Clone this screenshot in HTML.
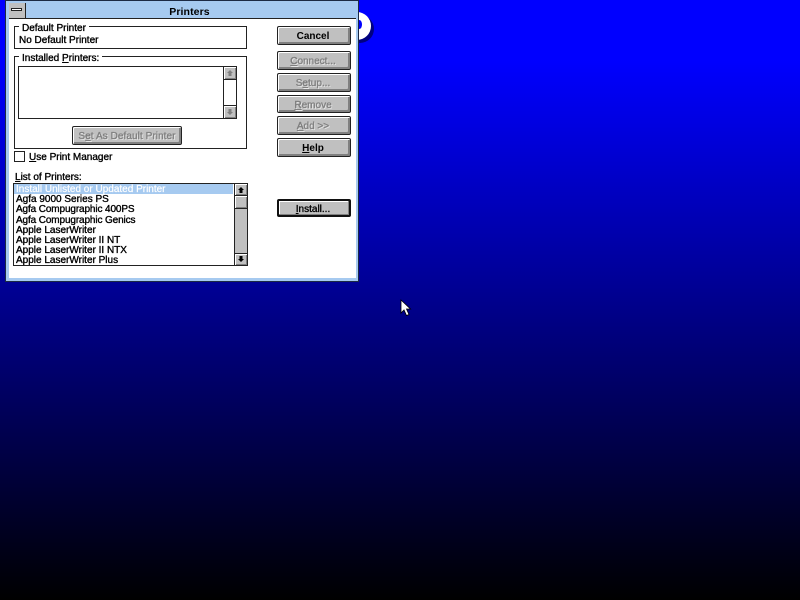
<!DOCTYPE html>
<html><head><meta charset="utf-8">
<style>
html,body{margin:0;padding:0;width:800px;height:600px;overflow:hidden;background:#000}
#bg{position:absolute;left:0;top:0;width:800px;height:600px;background:linear-gradient(to bottom,#0000ff 0,#0000ff 60px,#000 600px)}
.a{position:absolute}
.t{position:absolute;font-family:"Liberation Sans",sans-serif;font-size:10px;line-height:12px;color:#000;white-space:nowrap;-webkit-text-stroke:.35px currentColor;letter-spacing:0}
.t u{text-decoration:underline}
.btn{position:absolute;left:277px;width:74px;box-sizing:border-box;padding-right:2px;background:#c0c0c0;border:1px solid #222;border-radius:2px;box-shadow:inset 1px 1px 0 #fff,inset -2px -2px 0 #808080;text-align:center;font-family:"Liberation Sans",sans-serif;font-size:10px;color:#000;-webkit-text-stroke:.35px currentColor;letter-spacing:0;white-space:nowrap}
.dis{color:#808080;text-shadow:1px 1px 0 #e8e8e8}
.box{position:absolute;box-sizing:border-box;border:1px solid #222;background:#fff}
.sb{position:absolute;box-sizing:border-box;background:#c0c0c0;box-shadow:inset 1px 1px 0 #fff,inset -1px -1px 0 #808080}
</style></head><body>
<div id="bg"></div>

<!-- logo fragment -->
<div class="a" style="left:346px;top:15px;width:28px;height:28px;border-radius:50%;background:#000080"></div>
<div class="a" style="left:343px;top:12px;width:28px;height:28px;border-radius:50%;background:#fff"></div>
<div class="a" style="left:357px;top:20px;width:5px;height:9px;border-radius:50%;background:#0000ff"></div>

<!-- window -->
<div class="a" style="left:5px;top:0;width:354px;height:282px;box-sizing:border-box;border:1px solid #1c2a44;background:#a6caf0"></div>
<div class="a" style="left:9px;top:3px;width:347px;height:275px;background:#fff"></div>
<div class="a" style="left:9px;top:3px;width:347px;height:15px;background:#a6caf0;border-bottom:1px solid #222"></div>
<div class="a" style="left:9px;top:3px;width:16px;height:15px;background:#c0c0c0;border-right:1px solid #222"></div>
<div class="a" style="left:11px;top:8px;width:11px;height:3px;box-sizing:border-box;border:1px solid #222;background:#fff"></div>
<div class="t" style="left:9px;top:6px;width:361px;text-align:center;font-weight:bold;font-size:10.5px;-webkit-text-stroke:0;letter-spacing:.1px">Printers</div>

<!-- default printer group -->
<div class="box" style="left:14px;top:26px;width:233px;height:23px"></div>
<div class="t" style="left:19px;top:23px;height:11px;line-height:12px;background:#fff;padding:0 3px;overflow:hidden">Default Printer</div>
<div class="t" style="left:19px;top:35px">No Default Printer</div>

<!-- installed printers group -->
<div class="box" style="left:14px;top:56px;width:233px;height:93px"></div>
<div class="t" style="left:19px;top:53px;height:12px;line-height:12px;background:#fff;padding:0 3px;overflow:hidden">Installed <u>P</u>rinters:</div>
<div class="box" style="left:18px;top:66px;width:219px;height:53px"></div>
<div class="a" style="left:223px;top:66px;width:1px;height:53px;background:#222"></div>
<div class="sb" style="left:224px;top:67px;width:12px;height:13px;border-bottom:1px solid #222"></div>
<div class="sb" style="left:224px;top:105px;width:12px;height:13px;border-top:1px solid #222"></div>
<svg class="a" style="left:224px;top:67px" width="12" height="51"><path d="M6 3 L9 6 H7.5 V9 H4.5 V6 H3 Z M6 48 L9 45 H7.5 V42 H4.5 V45 H3 Z" fill="#808080"/></svg>
<div class="btn dis" style="left:72px;top:126px;width:110px;height:19px;line-height:20px;padding-right:0;letter-spacing:.07px">S<u>e</u>t As Default Printer</div>

<!-- checkbox -->
<div class="a" style="left:14px;top:151px;width:9px;height:9px;border:1px solid #222;background:#fff"></div>
<div class="t" style="left:29px;top:152px"><u>U</u>se Print Manager</div>

<!-- list -->
<div class="t" style="left:15px;top:172px"><u>L</u>ist of Printers:</div>
<div class="box" style="left:13px;top:183px;width:235px;height:83px"></div>
<div class="a" style="left:14px;top:184px;width:219px;height:10px;background:#a6caf0"></div>
<div class="t" style="left:16px;top:184px;height:10px;line-height:12px;overflow:hidden;color:#fff;-webkit-text-stroke:.2px #fff">Install Unlisted or Updated Printer</div>
<div class="t" style="left:16px;top:194px">Agfa 9000 Series PS</div>
<div class="t" style="left:16px;top:204px;letter-spacing:-.12px">Agfa Compugraphic 400PS</div>
<div class="t" style="left:16px;top:215px;letter-spacing:-.12px">Agfa Compugraphic Genics</div>
<div class="t" style="left:16px;top:225px">Apple LaserWriter</div>
<div class="t" style="left:16px;top:235px">Apple LaserWriter II NT</div>
<div class="t" style="left:16px;top:245px">Apple LaserWriter II NTX</div>
<div class="t" style="left:16px;top:254px;height:11px;line-height:13px;overflow:hidden">Apple LaserWriter Plus</div>
<!-- list scrollbar -->
<div class="a" style="left:234px;top:184px;width:13px;height:81px;background:#c0c0c0;border-left:1px solid #222;box-sizing:border-box"></div>
<div class="sb" style="left:235px;top:184px;width:12px;height:12px;border-bottom:1px solid #222"></div>
<div class="sb" style="left:235px;top:196px;width:12px;height:13px;border-bottom:1px solid #222"></div>
<div class="sb" style="left:235px;top:253px;width:12px;height:12px;border-top:1px solid #222"></div>
<svg class="a" style="left:235px;top:184px" width="12" height="81"><path d="M6 3 L9 6 H7.5 V9 H4.5 V6 H3 Z M6 78 L9 75 H7.5 V72 H4.5 V75 H3 Z" fill="#000"/></svg>

<!-- buttons -->
<div class="btn" style="top:26px;height:19px;line-height:20px;font-weight:bold;-webkit-text-stroke:0">Cancel</div>
<div class="btn dis" style="top:51px;height:19px;line-height:20px"><u>C</u>onnect...</div>
<div class="btn dis" style="top:73px;height:19px;line-height:20px">S<u>e</u>tup...</div>
<div class="btn dis" style="top:95px;height:18px;line-height:19px"><u>R</u>emove</div>
<div class="btn dis" style="top:116px;height:19px;line-height:20px"><u>A</u>dd &gt;&gt;</div>
<div class="btn" style="top:138px;height:19px;line-height:20px;font-weight:bold;-webkit-text-stroke:0"><u>H</u>elp</div>
<div class="btn" style="top:199px;height:18px;line-height:17px;border:2px solid #111;box-shadow:inset -1px -1px 0 #808080,inset 1px 1px 0 #fff"><u>I</u>nstall...</div>

<!-- cursor -->
<svg class="a" style="left:400px;top:299px" width="12" height="18"><path d="M1 1 V14 L4 11 L6.5 16.5 L9 15.5 L6.5 10 H10.5 Z" fill="#fff" stroke="#000" stroke-width=".8"/></svg>
</body></html>
